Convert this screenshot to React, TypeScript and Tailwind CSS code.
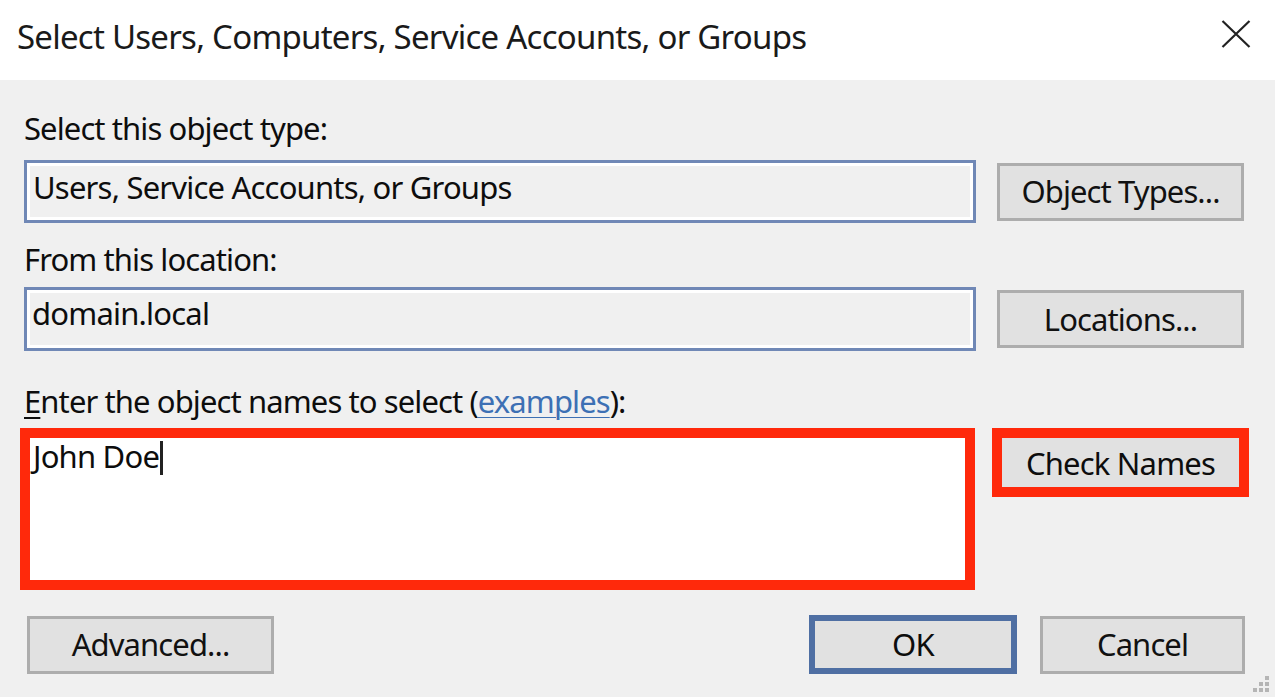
import React from "react";

const font = { fontFamily: '"Noto Sans", "Open Sans", sans-serif' };

function Btn({ children, className = "" }: { children: React.ReactNode; className?: string }) {
  return (
    <div
      className={
        "shrink-0 flex items-center justify-center bg-[#e1e1e1] border-[3px] border-[#adadad] text-[31px] tracking-[-0.9px] text-[#111] " +
        className
      }
    >
      {children}
    </div>
  );
}

export default function App() {
  return (
    <div className="w-[1275px] h-[697px] overflow-hidden bg-[#f0f0f0] flex flex-col text-[#0d0d0d]" style={font}>
      {/* Title bar */}
      <div className="h-[80px] bg-white flex items-center justify-between pl-[17px] pr-[24px] shrink-0">
        <span className="text-[33px] tracking-[-0.75px] text-[#1a1a1a] leading-none pb-[8px]">
          Select Users, Computers, Service Accounts, or Groups
        </span>
        <svg width="30" height="28" viewBox="0 0 30 28" className="mb-[12px]">
          <path d="M1.5 1 L28.5 27 M28.5 1 L1.5 27" stroke="#222" strokeWidth="2.2" fill="none" />
        </svg>
      </div>

      {/* Body */}
      <div className="relative flex-1 pl-[24px] pr-[10px]">
        <div className="text-[31px] leading-[40px] tracking-[-0.9px] pt-[28px] h-[80px]">Select this object type:</div>
        <div className="flex items-center gap-[21px]">
          <div className="shrink-0 w-[952px] h-[63px] border-[3px] border-[#7088b6] shadow-[inset_0_0_0_3px_#ffffff] bg-[#f0f0f0] flex items-center pl-[6px] text-[31px] tracking-[-0.8px] pb-[9px]">
            Users, Service Accounts, or Groups
          </div>
          <Btn className="w-[247px] h-[58px]">Object Types...</Btn>
        </div>

        <div className="text-[31px] leading-[40px] tracking-[-0.9px] pt-[16px] h-[64px]">From this location:</div>
        <div className="flex items-center gap-[21px]">
          <div className="shrink-0 w-[952px] h-[64px] border-[3px] border-[#7088b6] shadow-[inset_0_0_0_3px_#ffffff] bg-[#f0f0f0] flex items-center pl-[5px] text-[31px] tracking-[-0.8px] pb-[12px]">
            domain.local
          </div>
          <Btn className="w-[247px] h-[58px]">Locations...</Btn>
        </div>

        <div className="text-[31px] leading-[40px] tracking-[-0.9px] pt-[30px] h-[77px]">
          <span className="underline decoration-2 underline-offset-4">E</span>nter the object names to select (
          <span className="text-[#3d70b4] underline decoration-1 underline-offset-4">examples</span>):
        </div>

        <div className="flex items-start gap-[17px] -ml-[4px]">
          <div className="shrink-0 w-[955px] h-[162px] border-[10px] border-[#ff290b] bg-white pl-[3px] pt-[0px] text-[31px] tracking-[-0.8px] leading-[36px] flex items-start">
            <span>John Doe</span>
            <span className="inline-block w-[3px] h-[34px] bg-[#222] mt-[3px] ml-[1px]" />
          </div>
          <div className="shrink-0 w-[257px] h-[69px] border-[10px] border-[#ff290b] bg-[#e1e1e1] flex items-center justify-center text-[31px] tracking-[-0.8px] pt-[2px]">
            Check Names
          </div>
        </div>

        <div className="flex items-center mt-[25px] pl-[3px] mr-[20px]">
          <Btn className="w-[247px] h-[58px]">Advanced...</Btn>
          <div className="flex-1" />
          <div className="shrink-0 w-[208px] h-[59px] border-[6px] border-[#4f6fa3] bg-[#e1e1e1] flex items-center justify-center text-[31px] tracking-[-0.8px]">
            OK
          </div>
          <Btn className="w-[205px] h-[58px] ml-[23px]">Cancel</Btn>
        </div>

        <svg className="absolute right-[4px] bottom-[3px]" width="20" height="20" viewBox="0 0 20 20">
          {[
            [16, 4],
            [10, 10],
            [16, 10],
            [4, 16],
            [10, 16],
            [16, 16],
          ].map(([x, y], i) => (
            <rect key={i} x={x - 2} y={y - 2} width="4" height="4" fill="#b5b5b5" />
          ))}
        </svg>
      </div>
    </div>
  );
}
